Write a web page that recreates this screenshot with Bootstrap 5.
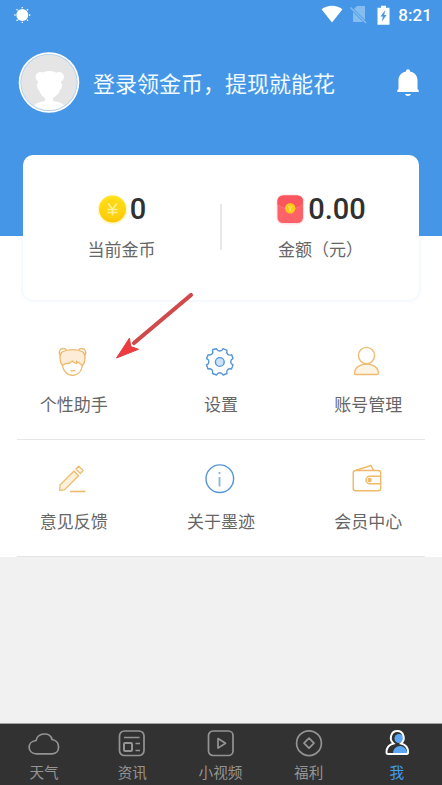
<!DOCTYPE html>
<html lang="zh-CN">
<head>
<meta charset="utf-8">
<meta name="viewport" content="width=device-width, initial-scale=1">
<title>我</title>
<link href="https://cdn.jsdelivr.net/npm/bootstrap@5.3.0/dist/css/bootstrap.min.css" rel="stylesheet">
<style>
body{font-family:"Noto Sans CJK SC",sans-serif;background:#f1f1f1;color:#666}
svg{display:block;flex:none;overflow:visible}
.screen{width:442px;height:785px;overflow:hidden}
.hero{background:#4696e7;height:236px;color:#fff}
.statusbar{height:30px;padding:0 10px 0 14px}
.sim{margin-left:7px}
.battery{margin-left:10px}
.clock{font:500 17px/30px Roboto,sans-serif;margin-left:8px;letter-spacing:.1px}
.profile{height:60px;margin-top:22px;padding:0 23px 0 18px}
.login-title{font-size:22px;line-height:32px;margin-left:13px;font-weight:400;color:#f0fbff}
.lower{background:#fff;height:321px}
.wallet{width:396px;height:145px;margin:-81px auto 0;left:0;border:0;border-radius:10px;box-shadow:0 0 4px rgba(70,150,231,.17)}
.amount{font:500 29px/32px Roboto,sans-serif;color:#303030;margin-top:1px;margin-left:1px}
.caption{font-size:17px;line-height:24px}
.stat{padding-top:37px}
.stat .caption{margin-top:12px}
.split{width:2px;height:46px;margin-top:49px;background:#e9e9e9}
.menu-item{height:117px;padding-top:22px}
.menu-item .caption{margin-top:13px}
.first-row{margin-top:23px}
.rule{height:1px;margin:-1px 17px 0;background:#e6e6e6}
.tabs{height:62px;background:#323232;border-top:1px solid #a0a0a0;padding-right:1px}
.tab-item{color:#949494;padding-top:4px;font-size:14.600px;line-height:20px}
.tab-item span{margin-top:4px}
.tab-item.current{color:#429cec}
.pointer{left:112px;top:288px}
</style>
<script src="https://cdn.jsdelivr.net/npm/bootstrap@5.3.0/dist/js/bootstrap.bundle.min.js"></script>
</head>
<body>
<div class="screen position-relative d-flex flex-column">
  <header class="hero flex-shrink-0">
    <div class="statusbar d-flex align-items-center">
      <svg width="17" height="17" viewBox="0 0 17 17"><circle cx="8.300" cy="8" r="6" fill="#fff"/><path d="M8.300 0v1.300M8.300 14.700V16M.3 8h1.300M15 8h1.300M2.600 2.300l1 1M13 12.700l1 1M14 2.300l-1 1M3.600 12.700l-1 1" stroke="#fff" stroke-width="1.300"/></svg>
      <svg class="ms-auto" width="22" height="18" viewBox="0 0 22 18"><path d="M.5 3.300C6.500-1.500 15.500-1.500 21.500 3.300L11 16.500Z" fill="#fff"/></svg>
      <svg class="sim" width="17" height="18" viewBox="0 0 17 18"><path d="M7 0h8v16H3V4Z" fill="#86bdf1"/><path d="M.5 1.500 16 17" stroke="#4696e7" stroke-width="2.800"/><path d="M.5 1.500 16 17" stroke="#86bdf1" stroke-width="1.400"/></svg>
      <svg class="battery" width="13" height="19" viewBox="0 0 13 19"><path d="M4-.2h5v2h3.500v17H.500v-17H4Z" fill="#fff"/><path d="M8.200 4 3.500 10.500h2.300L5 15.500 9.500 9H7.200Z" fill="#4696e7"/></svg>
      <span class="clock">8:21</span>
    </div>
    <div class="profile d-flex align-items-center">
      <svg width="62" height="62" viewBox="0 0 62 62"><defs><clipPath id="face"><circle cx="31" cy="31.500" r="27.500"/></clipPath></defs><circle cx="31" cy="31.500" r="30.300" fill="#fff"/><circle cx="31" cy="31.500" r="28.600" fill="#a9cdf0"/><circle cx="31" cy="31.500" r="27.800" fill="#e5e5e5"/><g fill="#fff" clip-path="url(#face)"><circle cx="22.500" cy="26" r="5"/><circle cx="41" cy="26" r="5"/><path d="M20 32c-1-7 4-12 11.500-12S44 25 43 32c2 1 1 6-1 7-1 4-4 6-7 8v3c8 1 12 3 14 10v3H13v-3c2-7 7-9 14-10v-3c-3-2-5-4-6-8-2-1-3-6-1-7Z"/></g></svg>
      <div class="login-title text-nowrap">登录领金币，提现就能花</div>
      <svg class="ms-auto" width="22" height="28" viewBox="0 0 22 28"><path d="M9 3.500c0-3 4-3 4 0 5 1 7.500 4.500 7.500 9V21l1.300 1.500c.3 1-.2 1.500-1 1.500H1.200c-.8 0-1.300-.5-1-1.500L1.500 21v-8.500c0-4.500 2.500-8 7.500-9ZM8 26h6c-.5 2.500-5.500 2.500-6 0Z" fill="#fff"/></svg>
    </div>
  </header>

  <main class="lower flex-shrink-0">
    <section class="wallet card flex-row">
      <div class="stat flex-fill w-50 d-flex flex-column align-items-center">
        <div class="d-flex align-items-center">
          <svg width="32" height="32" viewBox="0 0 32 32"><defs><linearGradient id="gold" x2="0" y2="1"><stop stop-color="#ffe51d"/><stop offset="1" stop-color="#fec500"/></linearGradient></defs><circle cx="15.500" cy="16.800" r="14.800" fill="#fff3b8" opacity=".7"/><circle cx="15.500" cy="16" r="13.500" fill="url(#gold)"/><circle cx="15.500" cy="16" r="10.500" fill="#ffd413" opacity=".6"/><path d="m11 10.500 4.500 5.500 4.500-5.500M10.500 16.500h10M10.500 19.500h10M15.500 16v6.500" stroke="#fff194" stroke-width="1.600" fill="none"/></svg>
          <span class="amount">0</span>
        </div>
        <div class="caption">当前金币</div>
      </div>
      <div class="split"></div>
      <div class="stat flex-fill w-50 d-flex flex-column align-items-center">
        <div class="d-flex align-items-center">
          <svg width="32" height="32" viewBox="0 0 32 32"><rect x="1.500" y="1.500" width="27.500" height="30" rx="7" fill="#ffd5d5" opacity=".7"/><rect x="2.500" y="2.500" width="25.500" height="27.500" rx="5.500" fill="#fe6269"/><path d="M2.500 11.500V8A5.500 5.500 0 0 1 8 2.500h14.500A5.500 5.500 0 0 1 28 8v3.500c-7 6-18.500 6-25.500 0Z" fill="#f9565f"/><path d="M2.500 11.500c7 6 18.500 6 25.500 0" fill="none" stroke="#ff777c"/><circle cx="15.200" cy="15.200" r="5.200" fill="#ffc91a"/><path d="m13.200 13 2 2.500 2-2.500M15.200 15.500v2.800" stroke="#ffe974" fill="none"/></svg>
          <span class="amount">0.00</span>
        </div>
        <div class="caption">金额（元）</div>
      </div>
    </section>

    <section class="first-row d-flex">
      <div class="menu-item col-4 d-flex flex-column align-items-center">
        <svg width="34" height="34" viewBox="0 0 34 34" fill="none" stroke="#eeb96c" stroke-width="1.300" stroke-linejoin="round"><path d="M3.500 10.500C.8 7.500 3 3.300 6.500 3.500c1.500 0 2.300.6 2.800 1.500M27.500 10.500c2.700-3 .5-7.200-3-7-1.500 0-2.300.6-2.800 1.500"/><path d="M5.300 18c.3 8 4.700 12.300 10.200 12.300S25.200 26 25.700 18"/><path d="M5.500 20.500C2.500 17 2 10 5 7c5.500-3.300 15.500-3.300 21 0 3 3 2.500 10-.5 13.500L22 18l-2.500-1.800.3 2.500c-2-.2-3.500-1-4.300-2.700-2 2-4.500 2.700-7 2.500Z" fill="#fdecd7"/><path d="M13.500 25.800h5"/></svg>
        <span class="caption">个性助手</span>
      </div>
      <div class="menu-item col-4 d-flex flex-column align-items-center">
        <svg width="34" height="34" viewBox="0 0 34 34" fill="none" stroke="#5495d6" stroke-width="1.400"><path d="M9 4.500 12.500 3.700c1.400 3.100 5.100 3.100 6.500 0l4 1.600c-1.100 3.200 1.300 5.700 4.700 4.500l1.300 3.700c-3.100 1.500-3.100 5 0 6.500l-1.500 4c-3.300-1-5.700 1.300-4.500 4.500l-4 1.500c-1.500-3-5-3-6.500 0l-4-1.500c1.200-3.200-1.300-5.600-4.500-4.500l-1.400-4c3.100-1.500 3.100-5 0-6.500l1.500-3.800c3.200 1.200 5.600-1.300 4.400-4.500Z" stroke-linejoin="round"/><circle cx="15.800" cy="17" r="4.400" fill="#cce4fa"/></svg>
        <span class="caption">设置</span>
      </div>
      <div class="menu-item col-4 d-flex flex-column align-items-center">
        <svg width="34" height="34" viewBox="0 0 34 34" fill="none" stroke="#efbb70" stroke-width="1.400"><circle cx="15.500" cy="10.500" r="8.100"/><path d="M3.600 28.500C3.600 15.800 27.400 15.800 27.400 28.500c0 .7-.4 1-1 1H4.600c-.6 0-1-.3-1-1Z" fill="#fef4e4"/></svg>
        <span class="caption">账号管理</span>
      </div>
    </section>
    <div class="rule"></div>
    <section class="d-flex">
      <div class="menu-item col-4 d-flex flex-column align-items-center">
        <svg width="34" height="34" viewBox="0 0 34 34" fill="none" stroke="#edbb6e" stroke-width="1.300" stroke-linejoin="round"><path d="m17 9 4.500 4.700L7.500 27.900l-4.800.4.300-5.300Z" fill="#fef1dc"/><path d="m18.800 7 3-2.800 4.300 4.400-2.600 3Z" fill="#fff6e8"/><path d="M13 29.500h15.500" stroke-width="1.600"/></svg>
        <span class="caption">意见反馈</span>
      </div>
      <div class="menu-item col-4 d-flex flex-column align-items-center">
        <svg width="34" height="34" viewBox="0 0 34 34" fill="none" stroke="#5595d8" stroke-width="1.400"><circle cx="15.800" cy="16.700" r="13.800"/><path d="M15.500 15V24.500M15.500 10V12" stroke-width="1.800" stroke="#7fb5e8"/></svg>
        <span class="caption">关于墨迹</span>
      </div>
      <div class="menu-item col-4 d-flex flex-column align-items-center">
        <svg width="34" height="34" viewBox="0 0 34 34" fill="none" stroke="#edb96a" stroke-width="1.400" stroke-linejoin="round"><rect x="2.200" y="8.500" width="27.500" height="20.300" rx="2.500"/><path d="m4.500 8.500 15.500-5 2.500 5M29.600 14.300H18.600a3.700 3.700 0 0 0 0 7.400h11"/><circle cx="18.600" cy="18" r="1.500" fill="#edb96a"/></svg>
        <span class="caption">会员中心</span>
      </div>
    </section>
    <div class="rule"></div>
  </main>

  <nav class="tabs d-flex mt-auto flex-shrink-0">
    <div class="tab-item col d-flex flex-column align-items-center">
      <svg width="32" height="30" viewBox="0 0 32 30" fill="none" stroke="#949494" stroke-width="1.700"><path d="M8.500 25.800C-1 25.500-1.500 13.500 8 12.500 10 4 22.500 4 24 11.500c8.500 1 9 14 0 14.300Z"/></svg>
      <span>天气</span>
    </div>
    <div class="tab-item col d-flex flex-column align-items-center">
      <svg width="30" height="30" viewBox="0 0 30 30" fill="none" stroke="#949494" stroke-width="1.700"><rect x="2.500" y="3" width="24.500" height="24.500" rx="5"/><path d="M7 9.500h15.500M18.500 15.500H23M18.500 22.500H23"/><rect x="7" y="15" width="8" height="8" rx="1" stroke-width="2"/></svg>
      <span>资讯</span>
    </div>
    <div class="tab-item col d-flex flex-column align-items-center">
      <svg width="30" height="30" viewBox="0 0 30 30" fill="none" stroke="#949494" stroke-width="1.700" stroke-linejoin="round"><rect x="2.500" y="3" width="24.500" height="24.500" rx="4.500"/><path d="m12 10.500 7.500 4.800-7.500 4.800Z"/></svg>
      <span>小视频</span>
    </div>
    <div class="tab-item col d-flex flex-column align-items-center">
      <svg width="30" height="30" viewBox="0 0 30 30" fill="none" stroke="#949494" stroke-width="1.700" stroke-linejoin="round"><circle cx="15" cy="15.200" r="12.400"/><path d="m15 10.200 5 5-5 5-5-5Z"/></svg>
      <span>福利</span>
    </div>
    <div class="tab-item current col d-flex flex-column align-items-center">
      <svg width="30" height="30" viewBox="0 0 30 30"><circle cx="17" cy="10.500" r="4.500" fill="#5aa5f4"/><path d="M11 25.500c0-9 12.500-11 14.500 0Z" fill="#5aa5f4"/><path d="M11.500 15.500C6.500 11.500 9 3 15.300 3s8.800 8.500 3.800 12.500c4.500 1.200 7 4.700 7 8.800 0 1.200-.5 1.700-1.500 1.700H6c-1 0-1.500-.5-1.500-1.700 0-4.100 2.500-7.600 7-8.800Z" fill="none" stroke="#fff" stroke-width="2"/></svg>
      <span>我</span>
    </div>
  </nav>

  <svg class="pointer position-absolute" width="90" height="75" viewBox="0 0 90 75"><path d="M79 7 22 55" stroke="#d04a4c" stroke-width="4.200" stroke-linecap="round"/><path d="m4.500 70 13-20 1.200 8.500 7.800 2.800Z" fill="#ef3b3e" stroke="#e04245"/></svg>
</div>
</body>
</html>
